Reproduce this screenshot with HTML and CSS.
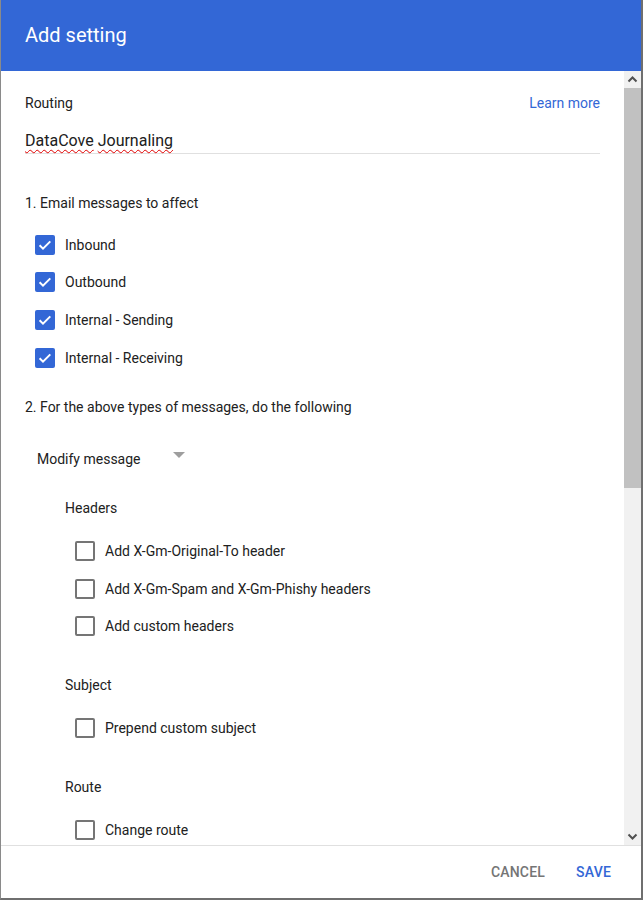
FILE: index.html
```html
<!DOCTYPE html>
<html>
<head>
<meta charset="utf-8">
<link rel="stylesheet" href="styles.css">
</head>
<body>
<div class="dialog">
  <div class="header">Add setting</div>
  <div class="main">
    <div class="content">
      <div class="row-between">
        <span class="label">Routing</span>
        <span class="link">Learn more</span>
      </div>
      <div class="input"><span class="spell">DataCove</span> <span class="spell">Journaling</span></div>

      <div class="section-title">1. Email messages to affect</div>
      <div class="checks lvl1">
        <div class="check"><svg class="box" viewBox="0 0 20 20"><rect x="0" y="0" width="20" height="20" rx="2" fill="#3367d6"/><path d="M4.6 10.3l3.4 3.3 7.3-7.2" fill="none" stroke="#fff" stroke-width="2"/></svg><span>Inbound</span></div>
        <div class="check"><svg class="box" viewBox="0 0 20 20"><rect x="0" y="0" width="20" height="20" rx="2" fill="#3367d6"/><path d="M4.6 10.3l3.4 3.3 7.3-7.2" fill="none" stroke="#fff" stroke-width="2"/></svg><span>Outbound</span></div>
        <div class="check"><svg class="box" viewBox="0 0 20 20"><rect x="0" y="0" width="20" height="20" rx="2" fill="#3367d6"/><path d="M4.6 10.3l3.4 3.3 7.3-7.2" fill="none" stroke="#fff" stroke-width="2"/></svg><span>Internal - Sending</span></div>
        <div class="check"><svg class="box" viewBox="0 0 20 20"><rect x="0" y="0" width="20" height="20" rx="2" fill="#3367d6"/><path d="M4.6 10.3l3.4 3.3 7.3-7.2" fill="none" stroke="#fff" stroke-width="2"/></svg><span>Internal - Receiving</span></div>
      </div>

      <div class="section-title s2">2. For the above types of messages, do the following</div>
      <div class="select"><span>Modify message</span><span class="arrow"></span></div>

      <div class="sub-title first">Headers</div>
      <div class="checks lvl2">
        <div class="check"><span class="ubox"></span><span>Add X-Gm-Original-To header</span></div>
        <div class="check"><span class="ubox"></span><span>Add X-Gm-Spam and X-Gm-Phishy headers</span></div>
        <div class="check"><span class="ubox"></span><span>Add custom headers</span></div>
      </div>

      <div class="sub-title">Subject</div>
      <div class="checks lvl2">
        <div class="check"><span class="ubox"></span><span>Prepend custom subject</span></div>
      </div>

      <div class="sub-title">Route</div>
      <div class="checks lvl2">
        <div class="check"><span class="ubox"></span><span>Change route</span></div>
      </div>
    </div>
    <div class="scrollbar">
      <div class="sb-btn"><svg viewBox="0 0 17 17" width="17" height="17"><path d="M4.5 10.5l4-4 4 4" fill="none" stroke="#505050" stroke-width="2"/></svg></div>
      <div class="sb-thumb"></div>
      <div class="sb-track"></div>
      <div class="sb-btn"><svg viewBox="0 0 17 17" width="17" height="17"><path d="M4.5 6.5l4 4 4-4" fill="none" stroke="#505050" stroke-width="2"/></svg></div>
    </div>
  </div>
  <div class="footer">
    <span class="btn cancel">CANCEL</span>
    <span class="btn save">SAVE</span>
  </div>
</div>
</body>
</html>
```
FILE: styles.css
```css
html, body {
  margin: 0;
  padding: 0;
  background: #fff;
}
body {
  font-family: Roboto, "Liberation Sans", sans-serif;
  color: #212121;
  font-size: 14px;
}
.dialog {
  width: 640px;
  height: 898px;
  border-left: 1px solid #8a8a8a;
  border-right: 2px solid #6f6f6f;
  border-bottom: 2px solid #6f6f6f;
  display: flex;
  flex-direction: column;
  overflow: hidden;
}
.header {
  height: 71px;
  flex: none;
  background: #3367d6;
  color: #fff;
  font-size: 20px;
  display: flex;
  align-items: center;
  padding-left: 24px;
  padding-bottom: 1px;
  box-sizing: border-box;
}
.main {
  flex: 1;
  display: flex;
  min-height: 0;
}
.content {
  flex: 1;
  padding: 22px 24px 0 24px;
  overflow: hidden;
}
.row-between {
  display: flex;
  justify-content: space-between;
  line-height: 20px;
}
.link {
  color: #3367d6;
}
.input {
  margin-top: 16px;
  font-size: 16px;
  line-height: 24px;
  border-bottom: 1px solid #e0e0e0;
  color: #202020;
}
.spell {
  text-decoration: underline wavy #e00000;
  text-decoration-thickness: 1px;
  text-underline-offset: 3px;
}
.section-title {
  margin-top: 39px;
  line-height: 20px;
}
.section-title.s2 {
  margin-top: 21px;
}
.checks {
  display: flex;
  flex-direction: column;
}
.lvl1 {
  margin-top: 13px;
  padding-left: 10px;
}
.lvl2 {
  margin-top: 14px;
  padding-left: 50px;
}
.check {
  height: 37.6px;
  display: flex;
  align-items: center;
  gap: 10px;
}
.box {
  width: 20px;
  height: 20px;
  flex: none;
}
.ubox {
  width: 16px;
  height: 16px;
  border: 2px solid #757575;
  border-radius: 2px;
  flex: none;
}
.select {
  margin-top: 32px;
  padding-left: 12px;
  line-height: 20px;
  display: flex;
  align-items: center;
}
.arrow {
  width: 0;
  height: 0;
  border-left: 6px solid transparent;
  border-right: 6px solid transparent;
  border-top: 6px solid #9e9e9e;
  margin-left: 32px;
  margin-bottom: 8px;
}
.sub-title {
  margin-top: 30px;
  padding-left: 40px;
  line-height: 20px;
}
.sub-title.first {
  margin-top: 29px;
}
.scrollbar {
  width: 17px;
  flex: none;
  display: flex;
  flex-direction: column;
  background: #f1f1f1;
}
.sb-btn {
  height: 17px;
  flex: none;
  display: flex;
}
.sb-thumb {
  height: 400px;
  flex: none;
  background: #c1c1c1;
}
.sb-track {
  flex: 1;
}
.footer {
  height: 52px;
  flex: none;
  border-top: 1px solid #e0e0e0;
  display: flex;
  justify-content: flex-end;
  align-items: center;
  gap: 31px;
  padding-right: 30px;
}
.btn {
  font-size: 14px;
  font-weight: 500;
  letter-spacing: 0.2px;
}
.cancel {
  color: #757575;
}
.save {
  color: #3367d6;
}
```
